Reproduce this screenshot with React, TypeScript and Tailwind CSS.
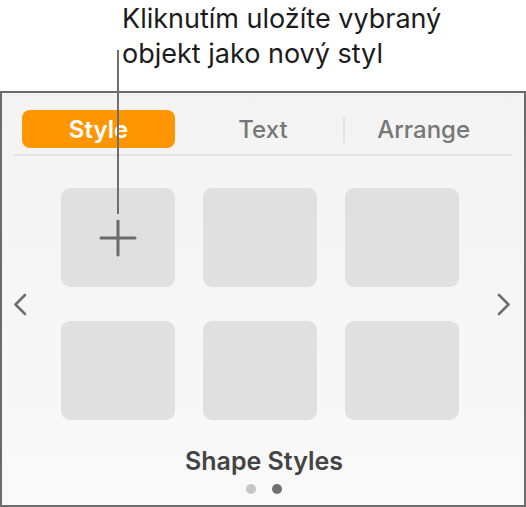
import React from "react";

const font = { fontFamily: "Inter, 'Noto Sans', sans-serif" };

function Chevron({ dir }: { dir: "left" | "right" }) {
  return (
    <svg width="14" height="23" viewBox="0 0 14 23" fill="none">
      <path
        d={dir === "left" ? "M12 2 L2.5 11.5 L12 21" : "M2 2 L11.5 11.5 L2 21"}
        stroke="#6f6f6f"
        strokeWidth="2.6"
        strokeLinecap="round"
        strokeLinejoin="round"
      />
    </svg>
  );
}

function Tile({ plus }: { plus?: boolean }) {
  return (
    <div className="w-[114px] h-[99px] rounded-[9px] bg-[#e0e0e0] flex items-center justify-center">
      {plus && (
        <svg width="38" height="38" viewBox="0 0 38 38">
          <path d="M19 2 V36 M2 19 H36" stroke="#6b6b6b" strokeWidth="3" strokeLinecap="round" />
        </svg>
      )}
    </div>
  );
}

export default function App() {
  return (
    <div className="relative w-[526px] h-[507px] bg-white overflow-hidden" style={font}>
      <div className="h-[91px] pl-[122px] pt-[1px] text-[27px] leading-[35px] text-[#1c1c1c]">
        <div>Kliknutím uložíte vybraný</div>
        <div>objekt jako nový styl</div>
      </div>

      <div className="h-[416px] w-[526px] border-2 border-[#6b6b6b] bg-gradient-to-b from-[#f3f3f3] to-[#f9f9f9] flex flex-col">
        <div className="grid grid-cols-3 items-center px-[20px] pt-[17px] h-[55px]">
          <div className="h-[38px] w-[153px] rounded-[8px] bg-[#ff9500] flex items-center justify-center pt-[2px] text-white text-[24px] font-semibold">
            Style
          </div>
          <div className="relative h-[38px] flex items-center justify-center pt-[2px] text-[#777777] text-[24px] font-medium">
            Text
            <div className="absolute right-[-2px] top-[7px] h-[26px] w-[2px] bg-[#e2e2e2]" />
          </div>
          <div className="h-[38px] flex items-center justify-center pt-[2px] text-[#777777] text-[24px] font-medium">
            Arrange
          </div>
        </div>
        <div className="mx-[12px] mt-[6px] h-[2px] bg-[#e4e4e4]" />

        <div className="flex items-center mt-[32px] pl-[11px]">
          <Chevron dir="left" />
          <div className="ml-[34px] grid grid-cols-3 gap-x-[28px] gap-y-[34px]">
            <Tile plus />
            <Tile />
            <Tile />
            <Tile />
            <Tile />
            <Tile />
          </div>
          <div className="ml-[38px]">
            <Chevron dir="right" />
          </div>
        </div>

        <div className="mt-[25px] text-center text-[25px] font-semibold text-[#444444] leading-[32px] pl-[2px]">
          Shape Styles
        </div>
        <div className="flex justify-center gap-[16px] mt-[7px] pl-[2px]">
          <div className="w-[10px] h-[10px] rounded-full bg-[#c6c6c6]" />
          <div className="w-[10px] h-[10px] rounded-full bg-[#707070]" />
        </div>
      </div>

      {/* callout leader line */}
      <div className="absolute left-[117px] top-[50px] h-[164px] w-[2px] bg-[#6e6e6e]" />
    </div>
  );
}
